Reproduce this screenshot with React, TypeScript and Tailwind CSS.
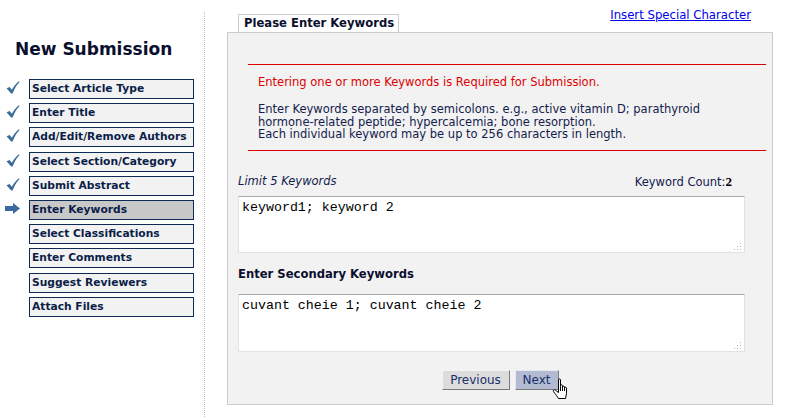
import React from "react";

const STEPS = [
  { label: "Select Article Type", state: "done" },
  { label: "Enter Title", state: "done" },
  { label: "Add/Edit/Remove Authors", state: "done" },
  { label: "Select Section/Category", state: "done" },
  { label: "Submit Abstract", state: "done" },
  { label: "Enter Keywords", state: "current" },
  { label: "Select Classifications", state: "todo" },
  { label: "Enter Comments", state: "todo" },
  { label: "Suggest Reviewers", state: "todo" },
  { label: "Attach Files", state: "todo" },
];

function Check() {
  return (
    <svg width="14" height="13" viewBox="0 0 14 13">
      <path d="M0.5 7.2 L3.6 6 L5.8 8.8 C7.6 5.6 9.8 2.6 12.8 0.2 L13.6 1 C10.8 3.8 8.6 7.4 6.6 12.4 L5.2 12.4 Z" fill="#3b6a9c" />
    </svg>
  );
}

function Arrow() {
  return (
    <svg width="15" height="11" viewBox="0 0 15 11">
      <path d="M0 3 L8 3 L8 0 L15 5.5 L8 11 L8 8 L0 8 Z" fill="#3b6a9c" />
    </svg>
  );
}

function Hand() {
  return (
    <svg width="17" height="22" viewBox="0 0 17 22">
      <path
        d="M6.5 1.8 C6.5 0.6 8.5 0.6 8.5 1.8 L8.5 8.5 L8.5 7.6 C8.5 6.5 10.5 6.5 10.5 7.6 L10.5 9 C10.5 7.9 12.5 7.9 12.5 9 L12.5 10 C12.5 8.9 14.5 8.9 14.5 10 L14.5 15.5 C14.5 17.5 13.5 18.5 13.5 20.5 L6.5 20.5 C5.5 18.5 3.5 16.3 1.4 13.4 C0.8 12.3 2.2 11.2 3.4 12.2 L6.5 14.6 Z"
        fill="#fff"
        stroke="#000"
        strokeWidth="1"
        strokeLinejoin="round"
      />
      <path d="M8.5 8.5 L8.5 13 M10.5 9 L10.5 13 M12.5 10 L12.5 13" stroke="#000" strokeWidth="1" />
    </svg>
  );
}

function Grip() {
  return (
    <svg width="8" height="8" viewBox="0 0 8 8" className="absolute right-[3px] bottom-[3px]">
      {[
        [6, 1],
        [6, 4],
        [3, 4],
        [6, 7],
        [3, 7],
        [0, 7],
      ].map(([x, y]) => (
        <rect key={`${x}-${y}`} x={x} y={y} width="1" height="1" fill="#b8b8b8" />
      ))}
    </svg>
  );
}

function KeywordBox({ value, h }: { value: string; h: string }) {
  return (
    <div className={`relative ml-[10px] w-[507px] ${h}`}>
      <textarea
        readOnly
        defaultValue={value}
        className="w-full h-full resize-none bg-white border border-[#dfe2e8] border-t-[#a9a9a9] px-[3px] pt-[3px] font-['Liberation_Mono',monospace] text-[13.3px] leading-[15px] text-black outline-none"
      />
      <Grip />
    </div>
  );
}

export default function App() {
  return (
    <div className="w-[786px] h-[417px] bg-white flex font-['DejaVu_Sans','Liberation_Sans',sans-serif] text-[#131c4d]">
      <aside className="w-[205px] shrink-0 mt-[12px] border-r border-dotted border-[#bdbdbd]">
        <h1 className="mt-[27px] pl-[15px] text-[17px] leading-[20px] font-bold text-[#0a0f2e]">New Submission</h1>
        <nav className="mt-[20px] flex flex-col gap-[4.2px]">
          {STEPS.map((s) => (
            <div key={s.label} className="flex items-center h-[20px]">
              <div className="w-[29px] flex justify-center pr-[4px] mb-[3px]">
                {s.state === "done" && <Check />}
                {s.state === "current" && <Arrow />}
              </div>
              <div
                className={`w-[165px] h-[20px] border border-[#0d2b55] pl-[2px] text-[10.7px] leading-[18px] font-bold text-[#0b1e48] ${
                  s.state === "current" ? "bg-[#c8c8c8]" : "bg-[#f2f2f2]"
                }`}
              >
                {s.label}
              </div>
            </div>
          ))}
        </nav>
      </aside>

      <main className="flex-1 pl-[22px] pr-[13px]">
        <div className="h-[32px] flex justify-between">
          <div className="self-end ml-[11px] w-[161px] h-[18px] border border-b-0 border-[#cccccc] bg-white pl-[5px] text-[11.6px] leading-[17px] font-bold text-[#0a0f2e]">
            Please Enter Keywords
          </div>
          <a href="#" className="self-start mt-[8px] mr-[22px] text-[11.7px] leading-[14px] text-[#0000ee] underline">
            Insert Special Character
          </a>
        </div>

        <section className="h-[373px] border border-[#cccccc] bg-[#f2f2f2]">
          <div className="mt-[31px] ml-[20px] mr-[6px] border-y border-[#dd0000] pt-[11px] pb-[9.5px] px-[10px] text-[11.5px]">
            <p className="leading-[13px] text-[#dd0000]">Entering one or more Keywords is Required for Submission.</p>
            <p className="mt-[14px] leading-[12.5px]">
              Enter Keywords separated by semicolons. e.g., active vitamin D; parathyroid
              <br />
              hormone-related peptide; hypercalcemia; bone resorption.
              <br />
              Each individual keyword may be up to 256 characters in length.
            </p>
          </div>

          <div className="mt-[23.5px] ml-[10px] mr-[40px] flex justify-between items-center text-[11.5px] leading-[13px]">
            <span className="italic">Limit 5 Keywords</span>
            <span>
              Keyword Count:<b className="font-['Liberation_Serif',serif] text-[13px] text-black">2</b>
            </span>
          </div>
          <div className="mt-[7.5px]">
            <KeywordBox value="keyword1; keyword 2" h="h-[57px]" />
          </div>

          <h2 className="mt-[13.5px] ml-[10px] text-[11.6px] leading-[15px] font-bold text-[#0a0f2e]">Enter Secondary Keywords</h2>
          <div className="mt-[12.5px]">
            <KeywordBox value="cuvant cheie 1; cuvant cheie 2" h="h-[58px]" />
          </div>

          <div className="mt-[18px] flex justify-center gap-[5px]">
            <button className="w-[68px] h-[20px] bg-[#dcdcdc] border border-[#f4f4f4] border-r-[#7a7a7a] border-b-[#7a7a7a] text-[12px] leading-[18px] text-[#1a2f6a]">
              Previous
            </button>
            <button className="relative w-[44px] h-[20px] bg-[#b3bbd3] border border-[#e4e8f2] border-r-[#7a7a7a] border-b-[#7a7a7a] text-[12px] leading-[18px] text-[#1a2f6a]">
              Next
              <span className="absolute left-[36px] top-[7px]">
                <Hand />
              </span>
            </button>
          </div>
        </section>
      </main>
    </div>
  );
}
